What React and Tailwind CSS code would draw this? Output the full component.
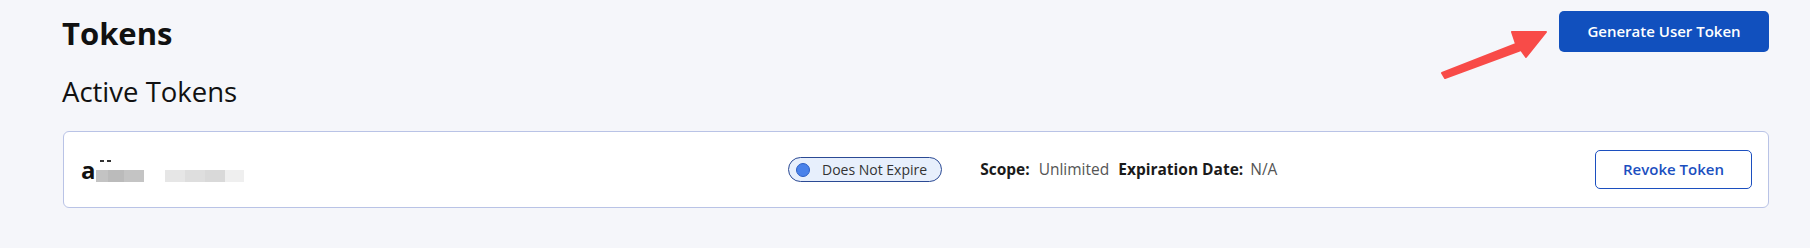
export default function App() {
  return (
    <div className="relative min-h-[248px] bg-[#f5f6fa] pl-[62px] pr-[41px] pt-[11px] font-['Open_Sans',sans-serif] text-[#111]">
      <div className="flex items-start justify-between">
        <h1 className="mt-[2px] text-[31px] font-bold leading-[40px]">Tokens</h1>
        <button className="h-[41px] w-[210px] rounded-[5px] bg-[#1150be] text-[15px] font-semibold text-white">
          Generate User Token
        </button>
      </div>

      <h2 className="mt-[23px] text-[27.5px] leading-[32px] text-[#111]">Active Tokens</h2>

      <div className="ml-px mt-[23px] flex h-[77px] items-center rounded-[6px] border border-[#b9c3e6] bg-white pl-[17px] pr-[16px]">
        <div className="flex w-[707px] items-end">
          <span className="text-[24px] font-bold leading-none">a</span>
          <div className="relative flex">
            <div className="absolute left-[4px] top-[-10px] flex gap-[3px]">
              <span className="h-[2px] w-[4px] bg-[#333]" />
              <span className="h-[2px] w-[4px] bg-[#333]" />
            </div>
            <span className="h-[12px] w-[12px] bg-[#c3c3c3]" />
            <span className="h-[12px] w-[16px] bg-[#bbbbbb]" />
            <span className="h-[12px] w-[20px] bg-[#c4c4c4]" />
          </div>
          <div className="ml-[21px] flex">
            <span className="h-[12px] w-[20px] bg-[#e6e6e6]" />
            <span className="h-[12px] w-[20px] bg-[#dedede]" />
            <span className="h-[12px] w-[20px] bg-[#d9d9d9]" />
            <span className="h-[12px] w-[19px] bg-[#efefef]" />
          </div>
        </div>

        <div className="flex h-[25px] items-center rounded-full border border-[#2b4a94] bg-[#e7effc] pl-[7px] pr-[14px]">
          <span className="h-[14px] w-[14px] rounded-full border border-[#2d5fc4] bg-[#4a82ea]" />
          <span className="ml-[12px] text-[14px] leading-none text-[#333]">Does Not Expire</span>
        </div>

        <div className="ml-[38px] flex items-center text-[15.5px]">
          <span className="font-bold text-[#1a1a1a]">Scope:</span>
          <span className="ml-[9px] text-[#555]">Unlimited</span>
          <span className="ml-[9px] font-bold text-[#1a1a1a]">Expiration Date:</span>
          <span className="ml-[7px] text-[#555]">N/A</span>
        </div>

        <div className="flex-1" />

        <button className="h-[39px] w-[157px] rounded-[5px] border border-[#1c4fbf] bg-white text-[15px] font-semibold text-[#1c4fbf]">
          Revoke Token
        </button>
      </div>

      <svg className="absolute left-[1430px] top-[20px]" width="130" height="65" viewBox="0 0 130 65">
        <polygon points="12,53 86,24 82,12 116,12 96,37 91,30 15,58" fill="#f84b48" strokeLinejoin="round" stroke="#f84b48" strokeWidth="2" />
      </svg>
    </div>
  )
}
